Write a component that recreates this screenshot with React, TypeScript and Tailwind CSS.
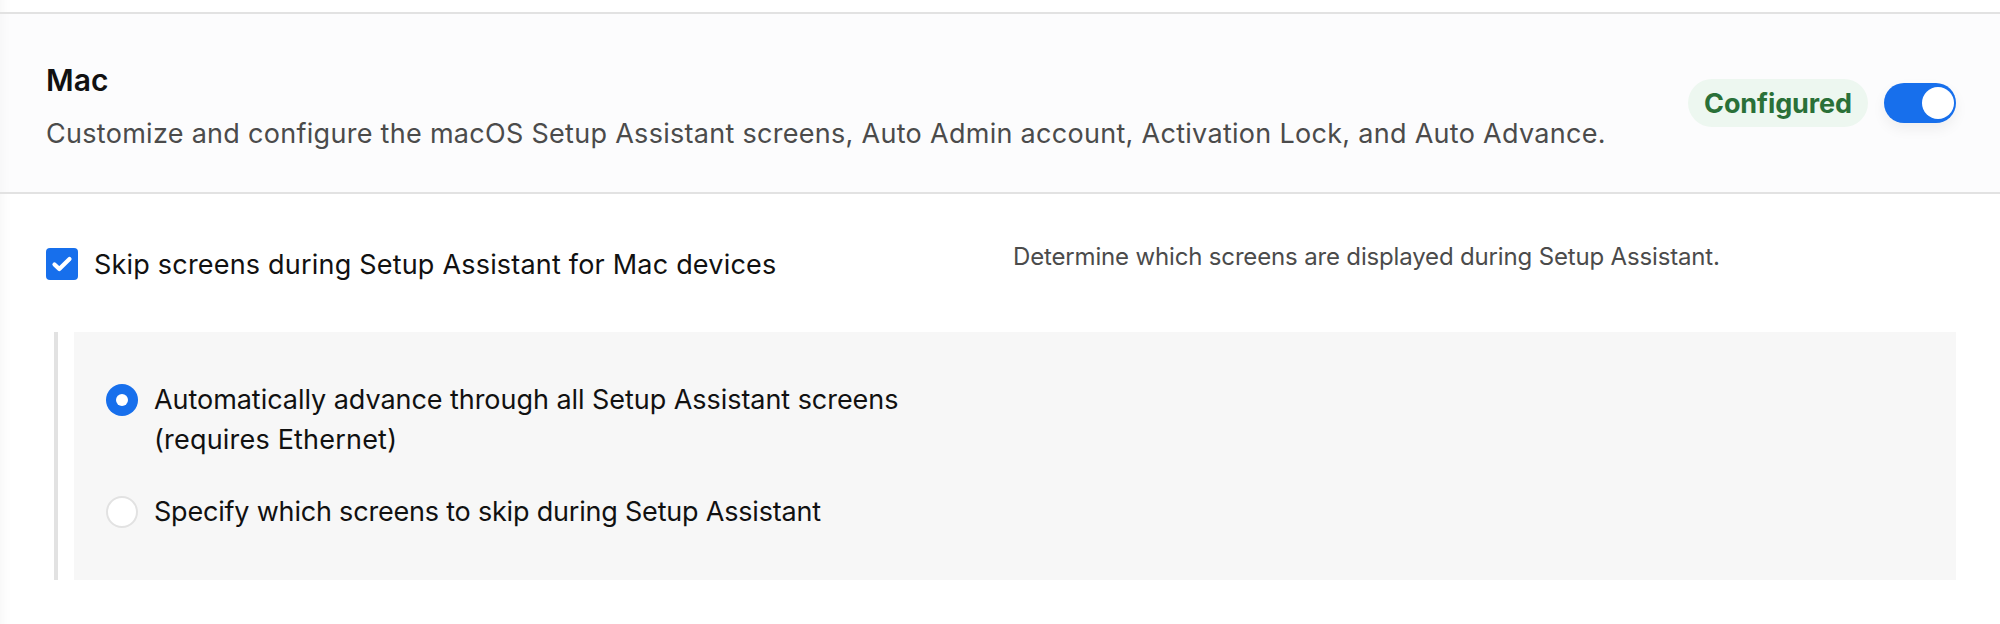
export default function App() {
  return (
    <div className="h-[624px] w-[2000px] overflow-hidden bg-white pt-3 font-['Inter',sans-serif] shadow-[inset_14px_0_14px_-14px_rgba(0,0,0,0.05)]">
      <div className="flex h-[182px] items-center justify-between border-y-2 border-[#e2e2e2] bg-[#fcfcfd] pl-[46px] pr-[44px] shadow-[inset_14px_0_14px_-14px_rgba(0,0,0,0.04)]">
        <div className="mt-[6px]">
          <h2 className="text-[30px] font-semibold leading-[40px] text-[#111111]">Mac</h2>
          <p className="mt-[15px] text-[27px] leading-[38px] tracking-[0.29px] text-[#4b4b4b]">
            Customize and configure the macOS Setup Assistant screens, Auto Admin account, Activation Lock, and Auto Advance.
          </p>
        </div>
        <div className="flex items-center gap-4">
          <span className="flex h-12 w-[180px] items-center justify-center rounded-full bg-[#edf7f0] pt-0.5 text-[27px] font-bold tracking-[-0.1px] text-[#2a7038]">
            Configured
          </span>
          <button className="flex h-10 w-[72px] items-center justify-end rounded-full bg-[#176fec] pr-0.5 shadow-[0_6px_14px_rgba(0,0,0,0.06)]">
            <span className="h-8 w-8 rounded-full bg-white" />
          </button>
        </div>
      </div>

      <div className="flex h-[138px] items-start pl-[46px]">
        <label className="mt-[51px] flex w-[967px] items-center gap-4">
          <span className="flex h-8 w-8 items-center justify-center rounded-[4px] bg-[#176fec]">
            <svg viewBox="0 0 32 32" className="h-8 w-8" fill="none">
              <path d="M8.5 16.5l4.8 4.6L23.5 11" stroke="white" strokeWidth="4.2" strokeLinecap="round" strokeLinejoin="round" />
            </svg>
          </span>
          <span className="pt-0.5 text-[27px] leading-9 tracking-[0.2px] text-[#111111]">Skip screens during Setup Assistant for Mac devices</span>
        </label>
        <p className="mt-[47px] text-[24px] leading-8 tracking-[-0.16px] text-[#4b4b4b]">Determine which screens are displayed during Setup Assistant.</p>
      </div>

      <div className="ml-[54px] mr-[44px] flex h-[248px] border-l-4 border-[#e2e2e2]">
        <div className="ml-4 flex-1 bg-[#f7f7f7] pl-8 pt-[48px]">
          <div className="flex items-start gap-4">
            <span className="mt-1 flex h-8 w-8 items-center justify-center rounded-full bg-[#176fec]">
              <span className="h-3 w-3 rounded-full bg-white" />
            </span>
            <span className="text-[27px] leading-10 text-[#111111]">
              <span className="tracking-[-0.05px]">Automatically advance through all Setup Assistant screens</span>
              <br />
              <span className="tracking-[0.2px]">(requires Ethernet)</span>
            </span>
          </div>
          <div className="mt-8 flex items-center gap-4">
            <span className="h-8 w-8 rounded-full border-2 border-[#e2e2e2] bg-white" />
            <span className="text-[27px] leading-10 tracking-[-0.2px] text-[#111111]">Specify which screens to skip during Setup Assistant</span>
          </div>
        </div>
      </div>
    </div>
  );
}
